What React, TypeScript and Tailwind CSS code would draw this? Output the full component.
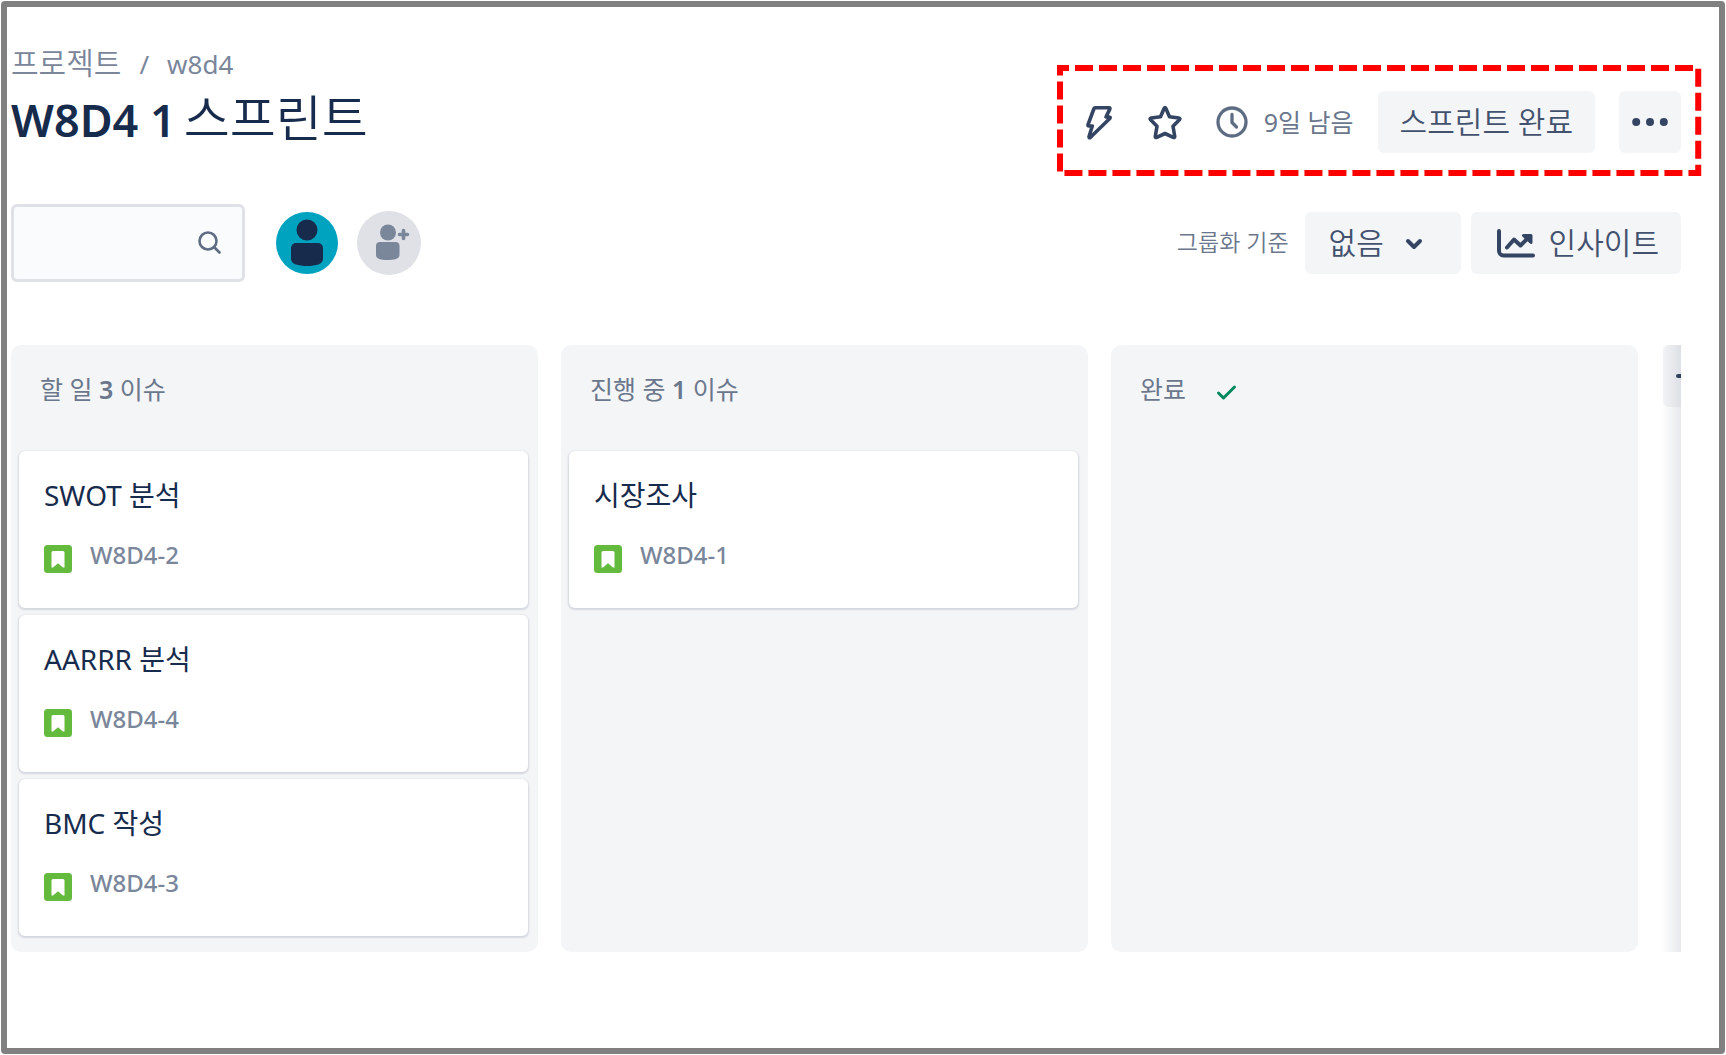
import React, { useState } from 'react';

type Issue = {
  key: string;
  title: string;
};

type Column = {
  name: string;
  done?: boolean;
  issues: Issue[];
};

const columns: Column[] = [
  {
    name: '할 일',
    issues: [
      { key: 'W8D4-2', title: 'SWOT 분석' },
      { key: 'W8D4-4', title: 'AARRR 분석' },
      { key: 'W8D4-3', title: 'BMC 작성' },
    ],
  },
  {
    name: '진행 중',
    issues: [{ key: 'W8D4-1', title: '시장조사' }],
  },
  { name: '완료', done: true, issues: [] },
];

const StoryIcon = () => (
  <svg className="mt-1.5 w-7 h-7 shrink-0" viewBox="0 0 28 28" aria-hidden="true">
    <rect width="28" height="28" rx="3.5" fill="#63ba3c" />
    <path d="M9 6h10a1.5 1.5 0 0 1 1.5 1.5v15h-1.5L14 18.2l-5 4.300H7.500V7.500A1.500 1.500 0 0 1 9 6z" fill="#fff" />
  </svg>
);

const IssueCard = ({ issue }: { issue: Issue }) => (
  <article className="h-[157px] rounded-md bg-white px-[25px] pt-5 shadow-[0_1px_2px_1px_rgba(9,30,66,0.14)]">
    <h3 className="text-[28px] leading-12 text-[#172b4d]">{issue.title}</h3>
    <div className="mt-5 flex items-start gap-[18px]">
      <StoryIcon />
      <a href="#" className="text-[24px] leading-8 font-medium text-[#7a869a]">
        {issue.key}
      </a>
    </div>
  </article>
);

const BoardColumn = ({ column }: { column: Column }) => (
  <section className="w-[527px] shrink-0 rounded-[10px] bg-[#f4f5f7] pr-[10px] pb-4 pl-2">
    <h2 className="flex h-[106px] items-start px-[21px] pt-7 text-[25px] leading-8 text-[#6b778c]">
      {column.done ? (
        <>
          {column.name}
          <svg className="ml-7 mt-2 h-5 w-6" viewBox="0 0 24 20" fill="none" stroke="#00875a" strokeWidth="3" strokeLinecap="round" strokeLinejoin="round" aria-hidden="true">
            <path d="M4.500 12l5 5L20.500 6" />
          </svg>
        </>
      ) : (
        <span>
          {column.name} <span className="font-semibold">{column.issues.length}</span> 이슈
        </span>
      )}
    </h2>
    <div className="flex flex-col gap-[7px]">
      {column.issues.map((issue) => (
        <IssueCard key={issue.key} issue={issue} />
      ))}
    </div>
  </section>
);

const SprintActions = () => (
  <div className="relative mt-[61px] -mr-[17px] flex h-[105px] items-center pt-[3px] pr-[17px] pl-6">
    {/* Red dashed highlight around the actions */}
    <svg className="pointer-events-none absolute inset-0 h-full w-full overflow-visible" aria-hidden="true">
      <rect x="0" y="0" width="100%" height="100%" fill="none" stroke="#ff0000" strokeWidth="6" strokeDasharray="18 6" strokeDashoffset="9" />
    </svg>
    <button type="button" aria-label="자동화">
      <svg className="h-9 w-8" viewBox="0 0 32 36" fill="none" stroke="#344563" strokeWidth="3.600" strokeLinejoin="round" aria-hidden="true">
        <path d="M11.300 3.700H25q1.400 0 .8 1.400L22 13h3.200q1.700 0 .6 1.500L6.500 33.300q-1.500 1.200-1.500-.6L8.300 22H5q-1.400 0-1-1.400L10 4.500q.3-.8 1.300-.8z" />
      </svg>
    </button>
    <button type="button" aria-label="별표 표시" className="ml-8">
      <svg className="h-9 w-9" viewBox="0 0 36 36" fill="none" stroke="#344563" strokeWidth="3.600" strokeLinejoin="round" aria-hidden="true">
        <path d="M16.200 4.300q.8-1.600 1.600 0l3.700 8.400 9.300 1.300q1.800.4.600 1.800L25 22.300l1.700 9.900q.1 1.800-1.500 1.200L17 29.500l-8.200 3.900q-1.600.6-1.500-1.200L9 22.300l-6.400-6.500q-1.200-1.400.6-1.800l9.300-1.300z" />
      </svg>
    </button>
    <svg className="ml-8 h-8 w-8" viewBox="0 0 32 32" fill="none" stroke="#5e6c84" strokeWidth="3.300" strokeLinecap="round" strokeLinejoin="round" aria-hidden="true">
      <circle cx="16" cy="16" r="14" />
      <path d="M16 8.500v8l4.500 4.500" />
    </svg>
    <span className="ml-4 text-[25px] leading-8 text-[#6b778c]">9일 남음</span>
    <button type="button" className="ml-6 h-[62px] rounded-md bg-[#f4f5f7] px-[22px] pb-0.5 text-[30px] font-[350] text-[#42526e]">
      스프린트 완료
    </button>
    <button type="button" aria-label="더 보기" className="ml-6 flex h-[62px] w-[62px] items-center justify-center rounded-md bg-[#f4f5f7]">
      <svg className="h-2 w-9" viewBox="0 0 36 8" fill="#344563" aria-hidden="true">
        <circle cx="4.200" cy="4" r="4" />
        <circle cx="18" cy="4" r="4" />
        <circle cx="31.800" cy="4" r="4" />
      </svg>
    </button>
  </div>
);

const App = () => {
  const [query, setQuery] = useState('');

  return (
    <div className="flex min-h-screen bg-white p-px font-['Noto_Sans','Noto_Sans_CJK_KR',sans-serif]">
      <main className="min-w-0 flex-1 rounded-sm border-6 border-[#808080] pr-[38px] pl-1">
        {/* Header */}
        <header className="flex items-start justify-between">
          <div className="pt-9">
            <nav className="flex items-baseline gap-[18px] text-[26px] leading-10 text-[#7a869a]">
              <a href="#" className="text-[30px] font-[350]">프로젝트</a>
              <span>/</span>
              <a href="#">w8d4</a>
            </nav>
            <h1 className="mt-0.5 flex items-baseline gap-2 text-[50px] leading-16 font-[350] text-[#172b4d]">
              <span className="text-[45px] font-semibold">W8D4 1</span> 스프린트
            </h1>
          </div>
          <SprintActions />
        </header>

        {/* Toolbar */}
        <div className="mt-[31px] flex h-[78px] items-center">
          <label className="flex h-full w-[234px] items-center rounded-md border-3 border-[#dfe1e6] bg-[#fafbfc] pr-5 pl-4">
            <input
              type="text"
              aria-label="검색"
              value={query}
              onChange={(e) => setQuery(e.target.value)}
              className="min-w-0 flex-1 bg-transparent text-[30px] text-[#172b4d] outline-none"
            />
            <svg className="h-6 w-6" viewBox="0 0 24 24" fill="none" stroke="#5e6c84" strokeWidth="2.600" strokeLinecap="round" aria-hidden="true">
              <circle cx="10" cy="10" r="8.500" />
              <path d="M16.500 16.500l5 5" />
            </svg>
          </label>
          <button type="button" aria-label="담당자" className="ml-[31px]">
            <svg className="h-[62px] w-[62px]" viewBox="0 0 62 62" aria-hidden="true">
              <circle cx="31" cy="31" r="31" fill="#00a3bf" />
              <circle cx="31" cy="18" r="10.500" fill="#172b4d" />
              <path d="M20 31h22a5 5 0 0 1 5 5v11c0 5-7 7-16 7s-16-2-16-7V36a5 5 0 0 1 5-5z" fill="#172b4d" />
            </svg>
          </button>
          <button type="button" aria-label="사람 추가" className="ml-[19px]">
            <svg className="h-16 w-16" viewBox="0 0 64 64" fill="#7a869a" aria-hidden="true">
              <circle cx="32" cy="32" r="32" fill="#dfe1e6" />
              <circle cx="31" cy="21.500" r="8" />
              <path d="M23 31h15.500a4 4 0 0 1 4 4v9c0 4-5.500 5-12 5s-11.500-1-11.500-5v-9a4 4 0 0 1 4-4z" />
              <path d="M46.500 19.500v8M42.500 23.500h8" fill="none" stroke="#7a869a" strokeWidth="3.600" strokeLinecap="round" />
            </svg>
          </button>

          <div className="ml-auto flex items-center">
            <span className="pb-0.5 text-[23px] font-[350] text-[#6b778c]">그룹화 기준</span>
            <button type="button" className="ml-4 flex h-[62px] w-[156px] items-center gap-5 rounded-md bg-[#f4f5f7] px-6 text-[30px] font-[350] text-[#42526e]">
              <span className="pb-0.5">없음</span>
              <svg className="h-4 w-5" viewBox="0 0 20 16" fill="none" stroke="#344563" strokeWidth="4" strokeLinecap="round" strokeLinejoin="round" aria-hidden="true">
                <path d="M4 6l6 6 6-6" />
              </svg>
            </button>
            <button type="button" className="ml-[10px] flex h-[62px] items-center gap-[14px] rounded-md bg-[#f4f5f7] pr-[22px] pl-6 text-[30px] font-[350] text-[#42526e]">
              <svg className="h-8 w-10" viewBox="0 0 40 32" fill="none" stroke="#344563" strokeWidth="4" strokeLinecap="round" strokeLinejoin="round" aria-hidden="true">
                <path d="M4 4v20a4.500 4.500 0 0 0 4.500 4.500H38" />
                <path d="M12 20.500l7-8 6.500 6L33 11" />
                <path d="M28.500 8.500h7.500v7z" fill="#344563" strokeWidth="3" />
              </svg>
              <span className="pb-0.5">인사이트</span>
            </button>
          </div>
        </div>

        {/* Board */}
        <div className="relative mt-[63px] flex gap-[23px] overflow-hidden">
          {columns.map((column) => (
            <BoardColumn key={column.name} column={column} />
          ))}
          <button type="button" aria-label="열 만들기" className="ml-0.5 flex h-[62px] w-[62px] shrink-0 items-center justify-center rounded-md bg-[#f4f5f7]">
            <svg className="h-9 w-9" viewBox="0 0 36 36" stroke="#344563" strokeWidth="4" strokeLinecap="round" aria-hidden="true">
              <path d="M18 4v28M2 18h32" />
            </svg>
          </button>
          <div className="pointer-events-none absolute inset-y-0 right-0 w-5 bg-linear-to-l from-[#091e42]/10 to-transparent" />
        </div>
      </main>
    </div>
  );
};

export default App;
